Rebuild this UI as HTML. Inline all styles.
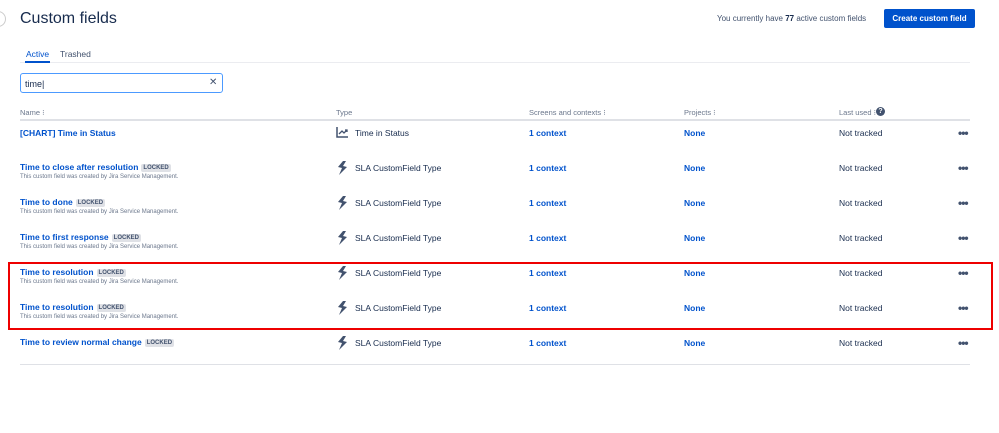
<!DOCTYPE html><html><head><style>
body{margin:0;width:999px;height:433px;background:#fff;font-family:"Liberation Sans",sans-serif;color:#172b4d;position:relative;overflow:hidden}
.a{position:absolute;white-space:nowrap}
.l{color:#0052cc;font-weight:bold;font-size:8.5px}
.t{font-size:8.5px;color:#172b4d}
.s{font-size:6px;color:#6b778c}
.lk{display:inline-block;background:#dfe1e6;color:#42526e;font-size:6px;font-weight:bold;padding:1px 2px;margin-left:3px;border-radius:2px;vertical-align:1px}
.h{font-size:7.5px;color:#6b778c}
.dots{font-size:12px;font-weight:bold;color:#42526e;letter-spacing:-1px}
</style></head><body>
<div class="a" style="left:-10px;top:11px;width:14px;height:14px;border:1px solid #ccc;border-radius:50%"></div>
<div class="a" style="left:20px;top:10px;font-size:16px;color:#172b4d">Custom fields</div>
<div class="a" style="left:717px;top:14px;font-size:8px;color:#42526e">You currently have <b style="color:#172b4d">77</b> active custom fields</div>
<div class="a" style="left:884px;top:9px;width:91px;height:19px;background:#0052cc;border-radius:2px;color:#fff;font-size:8px;font-weight:bold;text-align:center;line-height:19px">Create custom field</div>
<div class="a" style="left:26px;top:49px;font-size:8.5px;color:#0052cc">Active</div>
<div class="a" style="left:60px;top:49px;font-size:8.5px;color:#42526e">Trashed</div>
<div class="a" style="left:20px;top:62px;width:950px;height:1px;background:#ebecf0"></div>
<div class="a" style="left:25px;top:61px;width:25px;height:2px;background:#0052cc"></div>
<div class="a" style="left:20px;top:73px;width:201px;height:18px;border:1.5px solid #4c9aff;border-radius:3px"></div>
<div class="a" style="left:25px;top:79px;font-size:9px">time|</div>
<div class="a" style="left:209px;top:77px;font-size:10px;color:#42526e">✕</div>
<div class="a h" style="left:20px;top:108px">Name ⁝</div>
<div class="a h" style="left:336px;top:108px">Type</div>
<div class="a h" style="left:529px;top:108px">Screens and contexts ⁝</div>
<div class="a h" style="left:684px;top:108px">Projects ⁝</div>
<div class="a h" style="left:839px;top:108px">Last used ⁝</div>
<div class="a" style="left:876px;top:107px;width:9px;height:9px;border-radius:50%;background:#42526e;color:#fff;font-size:7px;text-align:center;line-height:9px;font-weight:bold">?</div>
<div class="a" style="left:20px;top:119px;width:950px;height:2px;background:#dfe1e6"></div>
<div class="a" style="left:20px;top:364px;width:950px;height:1px;background:#dfe1e6"></div>
<div class="a" style="left:8px;top:262px;width:981px;height:64px;border:2px solid #e00"></div>

<div class="a l" style="left:20px;top:128px">[CHART] Time in Status</div>
<svg class="a" style="left:336px;top:127px" width="13" height="11" viewBox="0 0 13 11"><path d="M1 0V10H12" stroke="#42526e" stroke-width="1.5" fill="none"/><path d="M3 7L6 4L8 6L11 3M9 3H11V5" stroke="#42526e" stroke-width="1.3" fill="none"/></svg>
<div class="a t" style="left:355px;top:128px">Time in Status</div>
<div class="a l" style="left:529px;top:128px">1 context</div>
<div class="a l" style="left:684px;top:128px">None</div>
<div class="a t" style="left:839px;top:128px">Not tracked</div>
<div class="a dots" style="left:958px;top:126px">•••</div>

<div id="r"></div>
<script>
var names=["Time to close after resolution","Time to done","Time to first response","Time to resolution","Time to resolution","Time to review normal change"];
var h="";names.forEach(function(n,i){var y=168+35*i;
h+='<div class="a l" style="left:20px;top:'+(y-6)+'px">'+n+'<span class="lk">LOCKED</span></div>';
if(i<5)h+='<div class="a s" style="left:20px;top:'+(y+6)+'px">This custom field was created by Jira Service Management.</div>';
h+='<svg class="a" style="left:337px;top:'+(y-7)+'px" width="11" height="14" viewBox="0 0 11 14"><path d="M6 0L1 6L5 7L2 14L10 6L6 5L9 0Z" fill="#42526e"/></svg>';
h+='<div class="a t" style="left:355px;top:'+(y-5)+'px">SLA CustomField Type</div>';
h+='<div class="a l" style="left:529px;top:'+(y-5)+'px">1 context</div>';
h+='<div class="a l" style="left:684px;top:'+(y-5)+'px">None</div>';
h+='<div class="a t" style="left:839px;top:'+(y-5)+'px">Not tracked</div>';
h+='<div class="a dots" style="left:958px;top:'+(y-7)+'px">•••</div>';});
document.getElementById("r").innerHTML=h;
</script>
</body></html>
